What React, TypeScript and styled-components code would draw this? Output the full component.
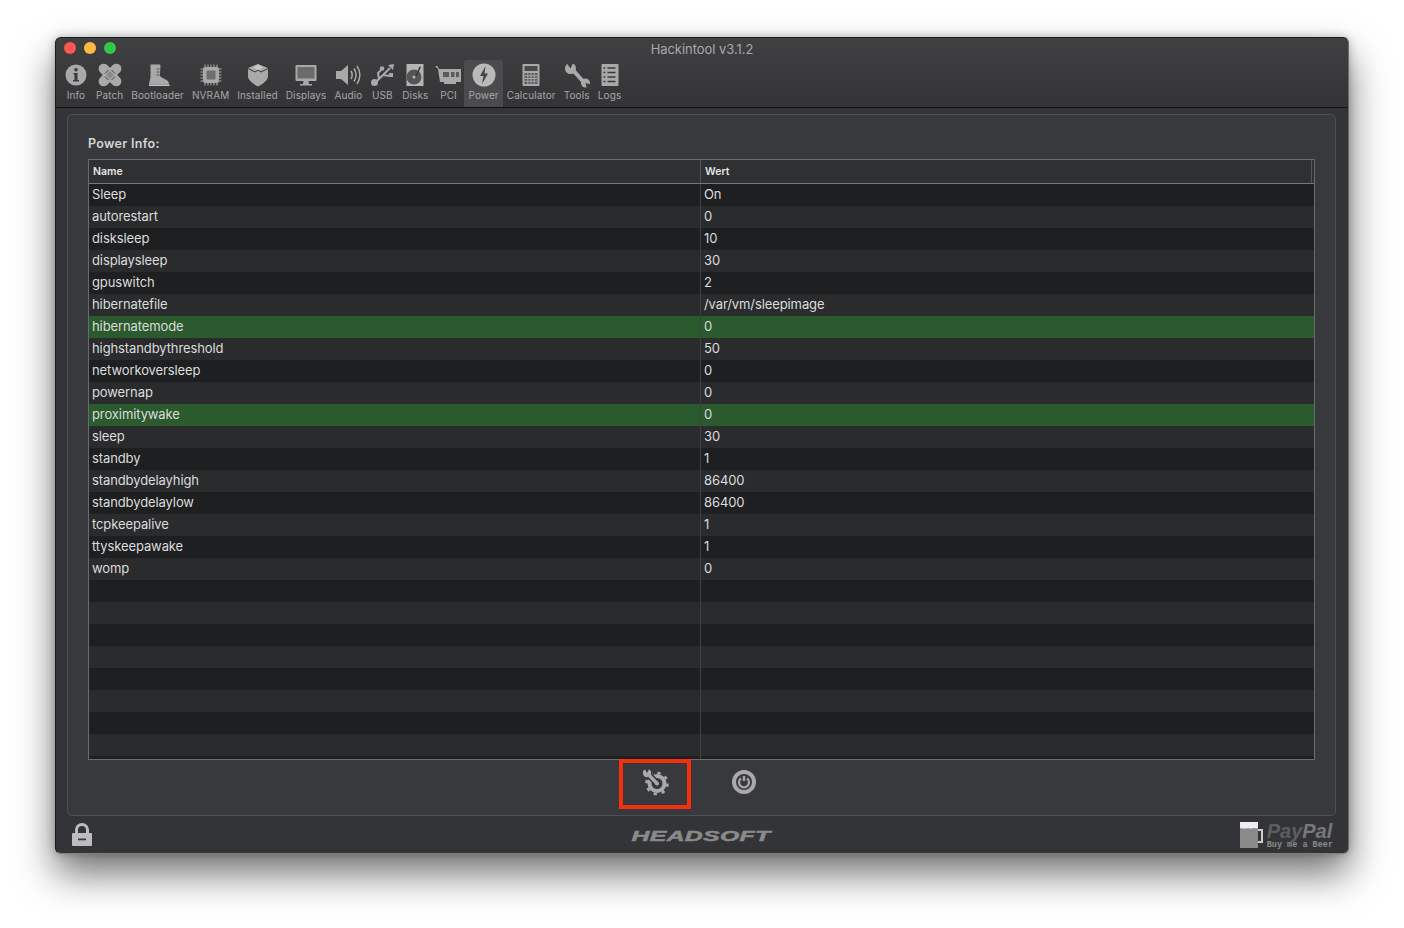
import React from "react";
import styled, { createGlobalStyle } from "styled-components";

const Global = createGlobalStyle`
  html, body { margin: 0; padding: 0; background: #fff; }
  body { width: 1404px; height: 928px; overflow: hidden; font-family: Inter, "Liberation Sans", sans-serif; }
`;

const Page = styled.div`
  padding: 37px 55px 0;
  height: 928px;
  box-sizing: border-box;
`;
const Win = styled.div`
  position: relative;
  width: 1294px;
  height: 817px;
  box-sizing: border-box;
  border-radius: 6px;
  background: #333437;
  border: 1px solid #1a1a1a;
  border-right-color: #6c6c6c;
  border-bottom-color: #808080;
  box-shadow: 0 20px 38px rgba(0, 0, 0, 0.55), 0 0 10px rgba(0, 0, 0, 0.25);
  display: flex;
  flex-direction: column;
`;
const TitleBar = styled.div`
  height: 69px;
  flex: none;
  background: linear-gradient(#404042, #343436);
  border-bottom: 1px solid #111;
  border-radius: 5px 5px 0 0;
  display: flex;
  flex-direction: column;
`;
const TopRow = styled.div`
  height: 22px;
  flex: none;
  position: relative;
  display: flex;
  align-items: center;
  justify-content: center;
`;
const Lights = styled.div`
  position: absolute;
  left: 8px;
  top: 4px;
  display: flex;
  gap: 8px;
`;
const Light = styled.span<{ $c: string }>`
  width: 12px;
  height: 12px;
  border-radius: 50%;
  background: ${(p) => p.$c};
`;
const Title = styled.div`
  font-size: 12.9px;
  color: #a8a8a8;
  padding-top: 1px;
`;
const Tools = styled.div`
  display: flex;
  padding-left: 4px;
  flex: 1;
`;
const Tool = styled.div<{ $active?: boolean }>`
  display: flex;
  flex-direction: column;
  align-items: center;
  padding: 0 4px;
  min-width: 32px;
  height: 47px;
  box-sizing: border-box;
  border-radius: 3px 3px 0 0;
  background: ${(p) => (p.$active ? "#4b4b4d" : "transparent")};
  svg { display: block; width: 28px; height: 28px; margin: 1px -10px 0; flex: none; }
`;
const ToolLabel = styled.span`
  font-size: 10px;
  line-height: 12px;
  letter-spacing: 0.1px;
  color: #a6a6a6;
  white-space: nowrap;
`;

const Body = styled.div`
  flex: 1;
  display: flex;
  flex-direction: column;
  padding: 6px 12px 0 11px;
  min-height: 0;
`;
const Panel = styled.div`
  height: 702px;
  flex: none;
  box-sizing: border-box;
  border: 1px solid #4f5052;
  border-radius: 5px;
  background: #38393c;
  padding: 21px 20px 0;
  display: flex;
  flex-direction: column;
`;
const Heading = styled.div`
  font-size: 12.5px;
  font-weight: 600;
  line-height: 16px;
  letter-spacing: 0.3px;
  color: #d4d4d4;
  margin-bottom: 7px;
`;
const Table = styled.div`
  width: 1227px;
  height: 601px;
  box-sizing: border-box;
  border: 1px solid #6a6b6d;
  overflow: hidden;
  background: #1e1f21;
  flex: none;
`;
const HeadRow = styled.div`
  height: 23px;
  display: grid;
  grid-template-columns: 612px 1fr 2px;
  background: #2f3032;
  border-bottom: 1px solid #77787a;
`;
const HeadCell = styled.div`
  font-size: 10.5px;
  font-weight: 600;
  color: #e4e4e4;
  line-height: 23px;
  padding-left: 4px;
  border-right: 1px solid #55565a;
`;
const Row = styled.div<{ $tone: "dark" | "light" | "green" }>`
  height: 22px;
  display: grid;
  grid-template-columns: 612px 1fr;
  background: ${(p) => (p.$tone === "green" ? "#2a5a2d" : p.$tone === "light" ? "#2a2b2d" : "#1e1f21")};
`;
const Cell = styled.div`
  font-size: 13px;
  line-height: 21px;
  color: #dcdcdc;
  padding-left: 3px;
  letter-spacing: -0.1px;
  white-space: nowrap;
`;
const NameCell = styled(Cell)`
  border-right: 1px solid #3f4042;
`;
const Actions = styled.div`
  flex: 1;
  display: flex;
  justify-content: center;
  align-items: center;
  gap: 60px;
  padding-bottom: 12px;
  padding-right: 3px;
  svg { display: block; width: 28px; height: 28px; }
`;
const Annotation = styled.div`
  position: absolute;
  left: 563px;
  top: 721px;
  width: 72px;
  height: 50px;
  box-sizing: border-box;
  border: 4px solid #f5300f;
`;
const Footer = styled.div`
  flex: 1;
  display: flex;
  align-items: center;
  justify-content: space-between;
  padding: 0 3px 0 2px;
  position: relative;
`;
const Brand = styled.div`
  position: absolute;
  left: 50%;
  top: 50%;
  transform: translate(-50%, -50%) scaleX(1.65);
  margin-left: -1px;
  font-family: "Liberation Sans", sans-serif;
  font-size: 15px;
  font-weight: 700;
  font-style: italic;
  letter-spacing: 0.2px;
  color: #8a8a8a;
  -webkit-text-stroke: 0.5px #8a8a8a;
`;
const Beer = styled.div`
  display: flex;
  align-items: center;
  gap: 3px;
  svg { display: block; width: 25px; height: 29px; }
`;
const BeerText = styled.div`
  display: flex;
  flex-direction: column;
  align-items: flex-start;
  padding-top: 1px;
`;
const PayPal = styled.div`
  font-family: "Liberation Sans", sans-serif;
  font-size: 20px;
  line-height: 20px;
  font-weight: 700;
  font-style: italic;
  color: #5c5d5f;
  b { color: #77787a; font-weight: 700; }
`;
const Small = styled.div`
  font-family: "Liberation Mono", monospace;
  font-size: 8.5px;
  line-height: 9px;
  font-weight: 700;
  color: #8a8a8a;
`;

const C = "#a9a9a9";
const D = "#3a3a3c";
const I: Record<string, React.ReactNode> = {
  Info: (<svg viewBox="0 0 28 28"><circle cx="14" cy="14" r="10.5" fill={C}/><circle cx="14" cy="8.8" r="1.8" fill={D}/><path d="M11.5 12h4v7h1.5v1.6h-6V19h1.500v-5.400h-1z" fill={D}/></svg>),
  Patch: (<svg viewBox="0 0 28 28"><g fill={C}><rect x="0" y="9" width="28" height="10" rx="5" transform="rotate(45 14 14)"/><rect x="0" y="9" width="28" height="10" rx="5" transform="rotate(-45 14 14)"/></g><path d="M10 14 14 10 18 14 14 18z" fill="#8b8b8b"/><g stroke={D} strokeWidth=".9"><path d="M9 12.500 12.500 9M15.500 19 19 15.500M9 15.500l3.500 3.500M15.500 9l3.500 3.500"/></g></svg>),
  Bootloader: (<svg viewBox="0 0 28 28"><path d="M6.500 3.500h9.500l.5 1-.6 10.500c2 2.400 6.500 3.200 8.500 5.500l.6 2.500H5l1.500-7z" fill={C}/><path d="M5 23.300h20.500v1.700H5z" fill="#c4c4c4"/><path d="M15.500 8h-3M15.500 11h-3M15.500 14h-3" stroke={D} strokeWidth=".8"/></svg>),
  NVRAM: (<svg viewBox="0 0 28 28"><rect x="6" y="6" width="16" height="16" rx="2" fill={C}/><rect x="9.500" y="9.500" width="9" height="9" rx="1" fill="#6f6f6f"/><path d="M8 3.500v21M11 3.500v21M14 3.500v21M17 3.500v21M20 3.500v21M3.500 8h21M3.500 11h21M3.500 14h21M3.500 17h21M3.500 20h21" stroke={C} strokeWidth="1.100" strokeDasharray="2.600 15.800"/></svg>),
  Installed: (<svg viewBox="0 0 28 28"><path d="M14 3 4 7v9c1 4 6 7.500 10 9.500 4-2 9-5.500 10-9.500V7z" fill={C}/><path d="M4 7.500 11 11l3-1.800L17 11l7-3.500" stroke={D} strokeWidth="1" fill="none"/><path d="M14 3.500 9 6.500l5 2.700 5-2.700z" fill="#c8c8c8"/></svg>),
  Displays: (<svg viewBox="0 0 28 28"><rect x="3.500" y="4" width="21" height="16" rx="1" fill={C}/><rect x="5.500" y="6" width="17" height="11.500" fill="#6b6b6b"/><path d="M11.500 20h5l.5 3h3v1.500H8V23h3z" fill={C}/></svg>),
  Audio: (<svg viewBox="0 0 28 28"><path d="M2 10h5l7-6v20l-7-6H2z" fill={C}/><path d="M17 10c1.500 2.500 1.500 5.500 0 8M20 7.500c2.500 4 2.500 9 0 13M23 5c3.500 5.500 3.500 12.500 0 18" stroke={C} strokeWidth="1.500" fill="none"/></svg>),
  USB: (<svg viewBox="0 0 28 28"><g stroke={C} strokeWidth="2" fill="none"><path d="M7 22 22 7M11 18l-1-6 3-3M15 14l6 1 2-2"/></g><circle cx="6.500" cy="21.500" r="3.500" fill={C}/><path d="M20 4l6-1-1 6z" fill={C}/><circle cx="14" cy="7.500" r="2.300" fill={C}/><rect x="21" y="12" width="4" height="4" fill={C}/></svg>),
  Disks: (<svg viewBox="0 0 28 28"><path d="M5.500 3h17v22h-17z" fill="#b4b4b4"/><circle cx="13" cy="16" r="7.500" fill="#555"/><circle cx="13" cy="16" r="1.500" fill="#b4b4b4"/><path d="m14.500 15 4-9.500 1.500.5-4.500 10z" fill="#3a3a3c"/></svg>),
  PCI: (<svg viewBox="0 0 28 28"><path d="M1 5h2.500L5 8h22v13h-5v2H10v-2H6L4 8z" fill={C}/><rect x="9" y="11" width="6" height="5" fill="#5a5a5a"/><rect x="17" y="11" width="3.500" height="5" fill="#5a5a5a"/><rect x="22" y="11" width="3" height="5" fill="#5a5a5a"/></svg>),
  Power: (<svg viewBox="0 0 28 28"><circle cx="14" cy="14" r="11.500" fill="#b9b9b9"/><path d="M15.500 5 10 15h3.500l-1.500 8 6-10.500h-3.500z" fill="#444"/></svg>),
  Calculator: (<svg viewBox="0 0 28 28"><rect x="5.500" y="3" width="17" height="22" rx="1" fill={C}/><rect x="7.500" y="5" width="13" height="5" fill="#4a4a4a"/><path d="M7.500 12h13v11h-13z" fill="#5a5a5a"/><path d="M10.800 12v11M14 12v11M17.200 12v11M7.500 14.800h13M7.500 17.500h13M7.500 20.200h13" stroke={C} strokeWidth="1"/></svg>),
  Tools: (<svg viewBox="0 0 28 28"><path d="M8 8c5 3 7 8 13.500 13.500" stroke={C} strokeWidth="4" fill="none"/><circle cx="7.500" cy="7.500" r="5.500" fill={C}/><path d="M7.500 7.500 3 1h7.500z" fill={D}/><circle cx="22.500" cy="22" r="4.500" fill={C}/><path d="M22.500 22 28 23.500V28h-4z" fill={D}/></svg>),
  Logs: (<svg viewBox="0 0 28 28"><rect x="5.500" y="3" width="17" height="22" rx="1" fill={C}/><path d="M11.500 7h8M11.500 11.500h8M11.500 16h8M11.500 20.500h8" stroke={D} strokeWidth="1.600"/><path d="M7.500 7h1.800M7.500 11.500h1.800M7.500 16h1.800M7.500 20.500h1.800" stroke={D} strokeWidth="1.600"/></svg>),
};
const names = ["Info","Patch","Bootloader","NVRAM","Installed","Displays","Audio","USB","Disks","PCI","Power","Calculator","Tools","Logs"];

const data: [string, string][] = [
  ["Sleep","On"],["autorestart","0"],["disksleep","10"],["displaysleep","30"],["gpuswitch","2"],
  ["hibernatefile","/var/vm/sleepimage"],["hibernatemode","0"],["highstandbythreshold","50"],
  ["networkoversleep","0"],["powernap","0"],["proximitywake","0"],["sleep","30"],["standby","1"],
  ["standbydelayhigh","86400"],["standbydelaylow","86400"],["tcpkeepalive","1"],["ttyskeepawake","1"],["womp","0"],
  ...Array.from({ length: 9 }, () => ["", ""] as [string, string]),
];
const green = new Set(["hibernatemode","proximitywake"]);

export default function App() {
  return (
    <Page>
      <Global />
      <Win>
        <TitleBar>
          <TopRow>
            <Lights>
              <Light $c="#fc5753" />
              <Light $c="#fdbc40" />
              <Light $c="#33c748" />
            </Lights>
            <Title>Hackintool v3.1.2</Title>
          </TopRow>
          <Tools>
            {names.map((n) => (
              <Tool key={n} $active={n === "Power"}>
                {I[n]}
                <ToolLabel>{n}</ToolLabel>
              </Tool>
            ))}
          </Tools>
        </TitleBar>
        <Body>
          <Panel>
            <Heading>Power Info:</Heading>
            <Table>
              <HeadRow>
                <HeadCell>Name</HeadCell>
                <HeadCell>Wert</HeadCell>
              </HeadRow>
              {data.map(([k, v], i) => (
                <Row key={i} $tone={green.has(k) ? "green" : i % 2 ? "light" : "dark"}>
                  <NameCell>{k}</NameCell>
                  <Cell>{v}</Cell>
                </Row>
              ))}
            </Table>
            <Actions>
              <svg viewBox="0 0 28 28">
                <circle cx="15" cy="15.500" r="7.500" fill="none" stroke="#a9a9a9" strokeWidth="4" />
                <circle cx="15" cy="15.500" r="10.500" fill="none" stroke="#a9a9a9" strokeWidth="2.600" strokeDasharray="3.300 4.950" />
                <path d="M5 5l10 10.500" stroke="#38393c" strokeWidth="6.500" />
                <path d="M5 5l10 10.500" stroke="#a9a9a9" strokeWidth="3.400" />
                <circle cx="5" cy="5" r="4.200" fill="#a9a9a9" />
                <path d="M5 5 2 -.5h6z" fill="#38393c" />
                <circle cx="15" cy="15.500" r="2" fill="#a9a9a9" />
              </svg>
              <svg viewBox="0 0 28 28">
                <circle cx="14" cy="14" r="10" fill="none" stroke="#a9a9a9" strokeWidth="4" />
                <path d="M11 10.300a5 5 0 1 0 6 0" fill="none" stroke="#a9a9a9" strokeWidth="2.200" />
                <path d="M14 8v5" stroke="#a9a9a9" strokeWidth="2.400" />
              </svg>
            </Actions>
          </Panel>
          <Footer>
            <svg width="26" height="26" viewBox="0 0 26 26">
              <path d="M7.500 11V8a5.500 5.500 0 0 1 11 0v3" fill="none" stroke="#bdbdbd" strokeWidth="3" />
              <rect x="3" y="11" width="20" height="13" rx="1" fill="#bdbdbd" />
              <rect x="9" y="16.500" width="8" height="1.800" fill="#3a3a3c" />
            </svg>
            <Brand>HEADSOFT</Brand>
            <Beer>
              <svg viewBox="0 0 25 29">
                <path d="M1 3h18v25H1z" fill="#8a8a8a" />
                <path d="M1 2h18v6c-2 1-3-.5-5 .3-2 .7-3-.3-5 0-3 .4-5 .5-8-.3z" fill="#eee" />
                <path d="M19 10h4v12h-4" fill="none" stroke="#ccc" strokeWidth="2" />
              </svg>
              <BeerText>
                <PayPal>Pay<b>Pal</b></PayPal>
                <Small>Buy me a Beer</Small>
              </BeerText>
            </Beer>
          </Footer>
        </Body>
        <Annotation />
      </Win>
    </Page>
  );
}
